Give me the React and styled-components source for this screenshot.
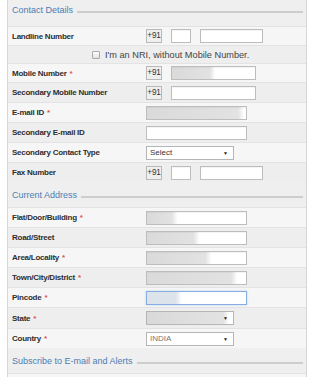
import React from "react";
import styled, { createGlobalStyle } from "styled-components";

const GlobalStyle = createGlobalStyle`
  body {
    margin: 0;
    background: #fff;
    font-family: "Liberation Sans", Arial, sans-serif;
  }
`;

const Panel = styled.div`
  margin-left: 7px;
  width: 298px;
  min-height: 377px;
  background: #efefef;
  border-left: 1px solid #d6d6d6;
  border-right: 1px solid #d6d6d6;
`;

const Legend = styled.div`
  display: flex;
  align-items: center;
  gap: 4px;
  height: 11px;
  padding: ${(p) => (p.$first ? "5px 3px 10px 4px" : "8px 3px 6px 4px")};
  color: #4a7db4;
  font-size: 9px;
  line-height: 11px;
  white-space: nowrap;
`;

const LegendLine = styled.span`
  flex: 1;
  height: 2px;
  margin-top: 3px;
  background: #cdcdcd;
`;

const Row = styled.div`
  display: grid;
  grid-template-columns: 134px 1fr;
  align-items: center;
  height: ${(p) => p.$h}px;
  padding-left: 4px;
  background: ${(p) => (p.$alt ? "#eeeeee" : "#f6f6f6")};
  border-top: 1px solid #e3e3e3;
  box-sizing: border-box;
`;

const NriRow = styled(Row)`
  display: flex;
  gap: 5px;
  padding-left: 84px;
  font-size: 9.2px;
  color: #444;
`;

const Check = styled.span`
  width: 6px;
  height: 6px;
  border: 1px solid #aaa;
  border-radius: 1px;
  background: linear-gradient(#fdfdfd, #e2e2e2);
`;

const Label = styled.span`
  font-size: 8px;
  letter-spacing: -0.25px;
  font-weight: bold;
  color: #2e2e2e;
  white-space: nowrap;
`;

const Req = styled.span`
  color: #d9534f;
  margin-left: 3px;
`;

const Fields = styled.div`
  display: flex;
  align-items: center;
  gap: 9px;
`;

const Code = styled.span`
  box-sizing: border-box;
  width: 16px;
  height: 14px;
  border: 1px solid #b9b9b9;
  background: #efefef;
  font-size: 8.2px;
  letter-spacing: -0.2px;
  line-height: 12px;
  color: #333;
  text-align: center;
`;

const Input = styled.span`
  box-sizing: border-box;
  display: block;
  width: ${(p) => p.$w}px;
  height: 14px;
  border: 1px solid ${(p) => (p.$focus ? "#86aee0" : "#bdbdbd")};
  box-shadow: ${(p) =>
    p.$focus ? "0 0 2px #b9d2f0" : "inset 0 1px 1px rgba(0,0,0,0.05)"};
  background: ${(p) =>
    p.$fill
      ? `linear-gradient(to right, ${p.$tint || "#dadada"} 0%, ${
          p.$tint || "#e2e2e2"
        } ${p.$fill - 6}%, #fff ${p.$fill}%)`
      : "#fff"};
`;

const Select = styled.span`
  box-sizing: border-box;
  display: flex;
  align-items: center;
  justify-content: space-between;
  width: 88px;
  height: 14px;
  padding: 0 5px 0 3px;
  border: 1px solid #b5b5b5;
  font-size: 8px;
  color: ${(p) => (p.$muted ? "#777" : "#333")};
  background: ${(p) =>
    p.$fill
      ? `linear-gradient(to right, #d9d9d9 0%, #e3e3e3 ${p.$fill - 6}%, #fff ${p.$fill}%)`
      : "#fff"};
`;

const Arrow = styled.span`
  font-size: 5px;
  color: #222;
`;

const contact = [
  { label: "Landline Number", kind: "phone", h: 19 },
  { kind: "nri", h: 18 },
  { label: "Mobile Number", req: true, kind: "mobile", fill: 52, h: 19 },
  { label: "Secondary Mobile Number", kind: "mobile", h: 20 },
  { label: "E-mail ID", req: true, kind: "text", fill: 98, h: 20 },
  { label: "Secondary E-mail ID", kind: "text", h: 20 },
  { label: "Secondary Contact Type", kind: "select", value: "Select", h: 20 },
  { label: "Fax Number", kind: "phone", h: 20 },
];

const address = [
  { label: "Flat/Door/Building", req: true, kind: "text", fill: 31, h: 20 },
  { label: "Road/Street", kind: "text", fill: 53, h: 20 },
  { label: "Area/Locality", req: true, kind: "text", fill: 65, h: 20 },
  { label: "Town/City/District", req: true, kind: "text", fill: 91, h: 20 },
  { label: "Pincode", req: true, kind: "text", fill: 35, focus: true, h: 20 },
  { label: "State", req: true, kind: "select", value: "", fill: 95, h: 21 },
  { label: "Country", req: true, kind: "select", value: "INDIA", muted: true, h: 20 },
];

function Field({ row }) {
  switch (row.kind) {
    case "phone":
      return (
        <Fields>
          <Code>+91</Code>
          <Input $w={20} />
          <Input $w={63} />
        </Fields>
      );
    case "mobile":
      return (
        <Fields>
          <Code>+91</Code>
          <Input $w={85} $fill={row.fill} />
        </Fields>
      );
    case "select":
      return (
        <Select $fill={row.fill} $muted={row.muted}>
          <span>{row.value}</span>
          <Arrow>▼</Arrow>
        </Select>
      );
    default:
      return (
        <Input
          $w={101}
          $fill={row.fill}
          $focus={row.focus}
          $tint={row.focus ? "#dde3ea" : undefined}
        />
      );
  }
}

function Rows({ rows }) {
  return rows.map((row, i) =>
    row.kind === "nri" ? (
      <NriRow key="nri" $h={row.h} $alt={i % 2 === 1}>
        <Check />
        <span>I'm an NRI, without Mobile Number.</span>
      </NriRow>
    ) : (
      <Row key={row.label} $h={row.h} $alt={i % 2 === 1}>
        <Label>
          {row.label}
          {row.req ? <Req>*</Req> : null}
        </Label>
        <Field row={row} />
      </Row>
    )
  );
}

export default function App() {
  return (
    <>
      <GlobalStyle />
      <Panel>
        <Legend $first>
          Contact Details
          <LegendLine />
        </Legend>
        <Rows rows={contact} />
        <Legend>
          Current Address
          <LegendLine />
        </Legend>
        <Rows rows={address} />
        <Legend>
          Subscribe to E-mail and Alerts
          <LegendLine />
        </Legend>
        <Row $h={20} />
      </Panel>
    </>
  );
}
